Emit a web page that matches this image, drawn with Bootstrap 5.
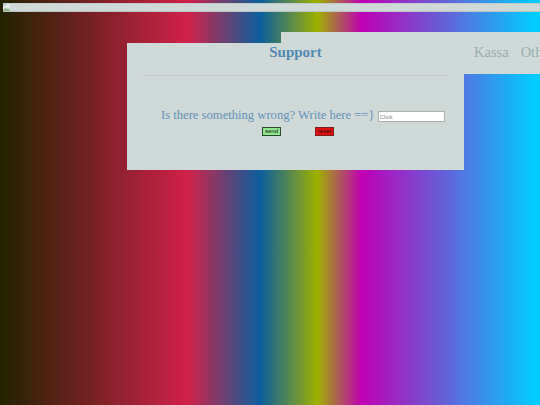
<!DOCTYPE html>
<html lang="en">
<head>
<meta charset="utf-8">
<title>Support</title>
<link rel="stylesheet" href="https://cdn.jsdelivr.net/npm/bootstrap@5.3.0/dist/css/bootstrap.min.css">
<style>
html,body{height:100%;overflow:hidden}
body{margin:0;padding:3px 0 0 3px;font-family:"Liberation Serif","Times New Roman",serif;background:linear-gradient(to right,#222200 0%,#d12148 34.8%,#0a5f9e 48.2%,#9fb000 58.8%,#c000b4 67%,#00ccff 99%)}
.imgstrip{height:9px;background:#cfdad8;border-top:1px solid #c4cccb;border-bottom:1px solid #b9c2c1;overflow:hidden}
.imgstrip svg{display:block}
.stage{position:relative;height:390px}
.topnav{position:absolute;left:278px;top:20px;width:262px;height:42px;background:#cfdad8;padding:12px 0 0 193px;white-space:nowrap;font-size:14.5px;line-height:17px;color:#97adad;gap:12px}
.mainbox{position:absolute;left:124px;top:31px;width:337px;height:127px;background:#cfdad8;padding:0 16px}
.boxtitle{font-size:15px;font-weight:700;color:#5288b5;line-height:18px;margin:0;text-align:center}
.boxrule{height:1px;margin:14px 0 0;background:#c4c9c9;opacity:1;border:0}
.askrow{margin-top:30px;padding-left:18px;gap:3px;color:#6291ba;font-size:12.62px;line-height:18px;white-space:nowrap}
.clickinput{width:67px;height:11px;font:6px "Liberation Sans",Arial,sans-serif;padding:0 1px;border:1px solid #b0b0b0;background:#fff;border-radius:0;margin-top:5px;flex:none}
.clickinput::placeholder{color:#8a8a8a;opacity:1}
.btnrow{padding-left:119px;gap:34px;margin-top:3px}
.tinybtn{width:19px;height:9px;padding:0;font:6px/7px "Liberation Sans",Arial,sans-serif;color:#111;border:1px solid #333;border-radius:0}
.tinybtn-send{background:#90e690;border-color:#2b4a2b}
.tinybtn-reset{background:#e01010;border-color:#7a2020}
</style>
</head>
<body>
<div class="imgstrip"><svg width="7" height="7" viewBox="0 0 7 7" aria-hidden="true"><rect width="7" height="7" fill="#e6eaea"/><path d="M0 6 2.500 3.500 4 5 5 4 7 6V7H0Z" fill="#8fbb8f"/><rect width="3" height="2" fill="#c2d0e4"/></svg></div>
<div class="stage">
  <nav class="topnav d-flex"><span>Kassa</span><span>Other</span></nav>
  <div class="mainbox">
    <h1 class="boxtitle">Support</h1>
    <hr class="boxrule">
    <form>
      <div class="askrow d-flex align-items-start">
        <label for="q">Is there something wrong? Write here ==}</label>
        <input id="q" class="clickinput" type="text" placeholder="Click">
      </div>
      <div class="btnrow d-flex">
        <button type="submit" class="tinybtn tinybtn-send">send</button>
        <button type="reset" class="tinybtn tinybtn-reset">reset</button>
      </div>
    </form>
  </div>
</div>
<script src="https://cdn.jsdelivr.net/npm/bootstrap@5.3.0/dist/js/bootstrap.bundle.min.js"></script>
</body>
</html>
